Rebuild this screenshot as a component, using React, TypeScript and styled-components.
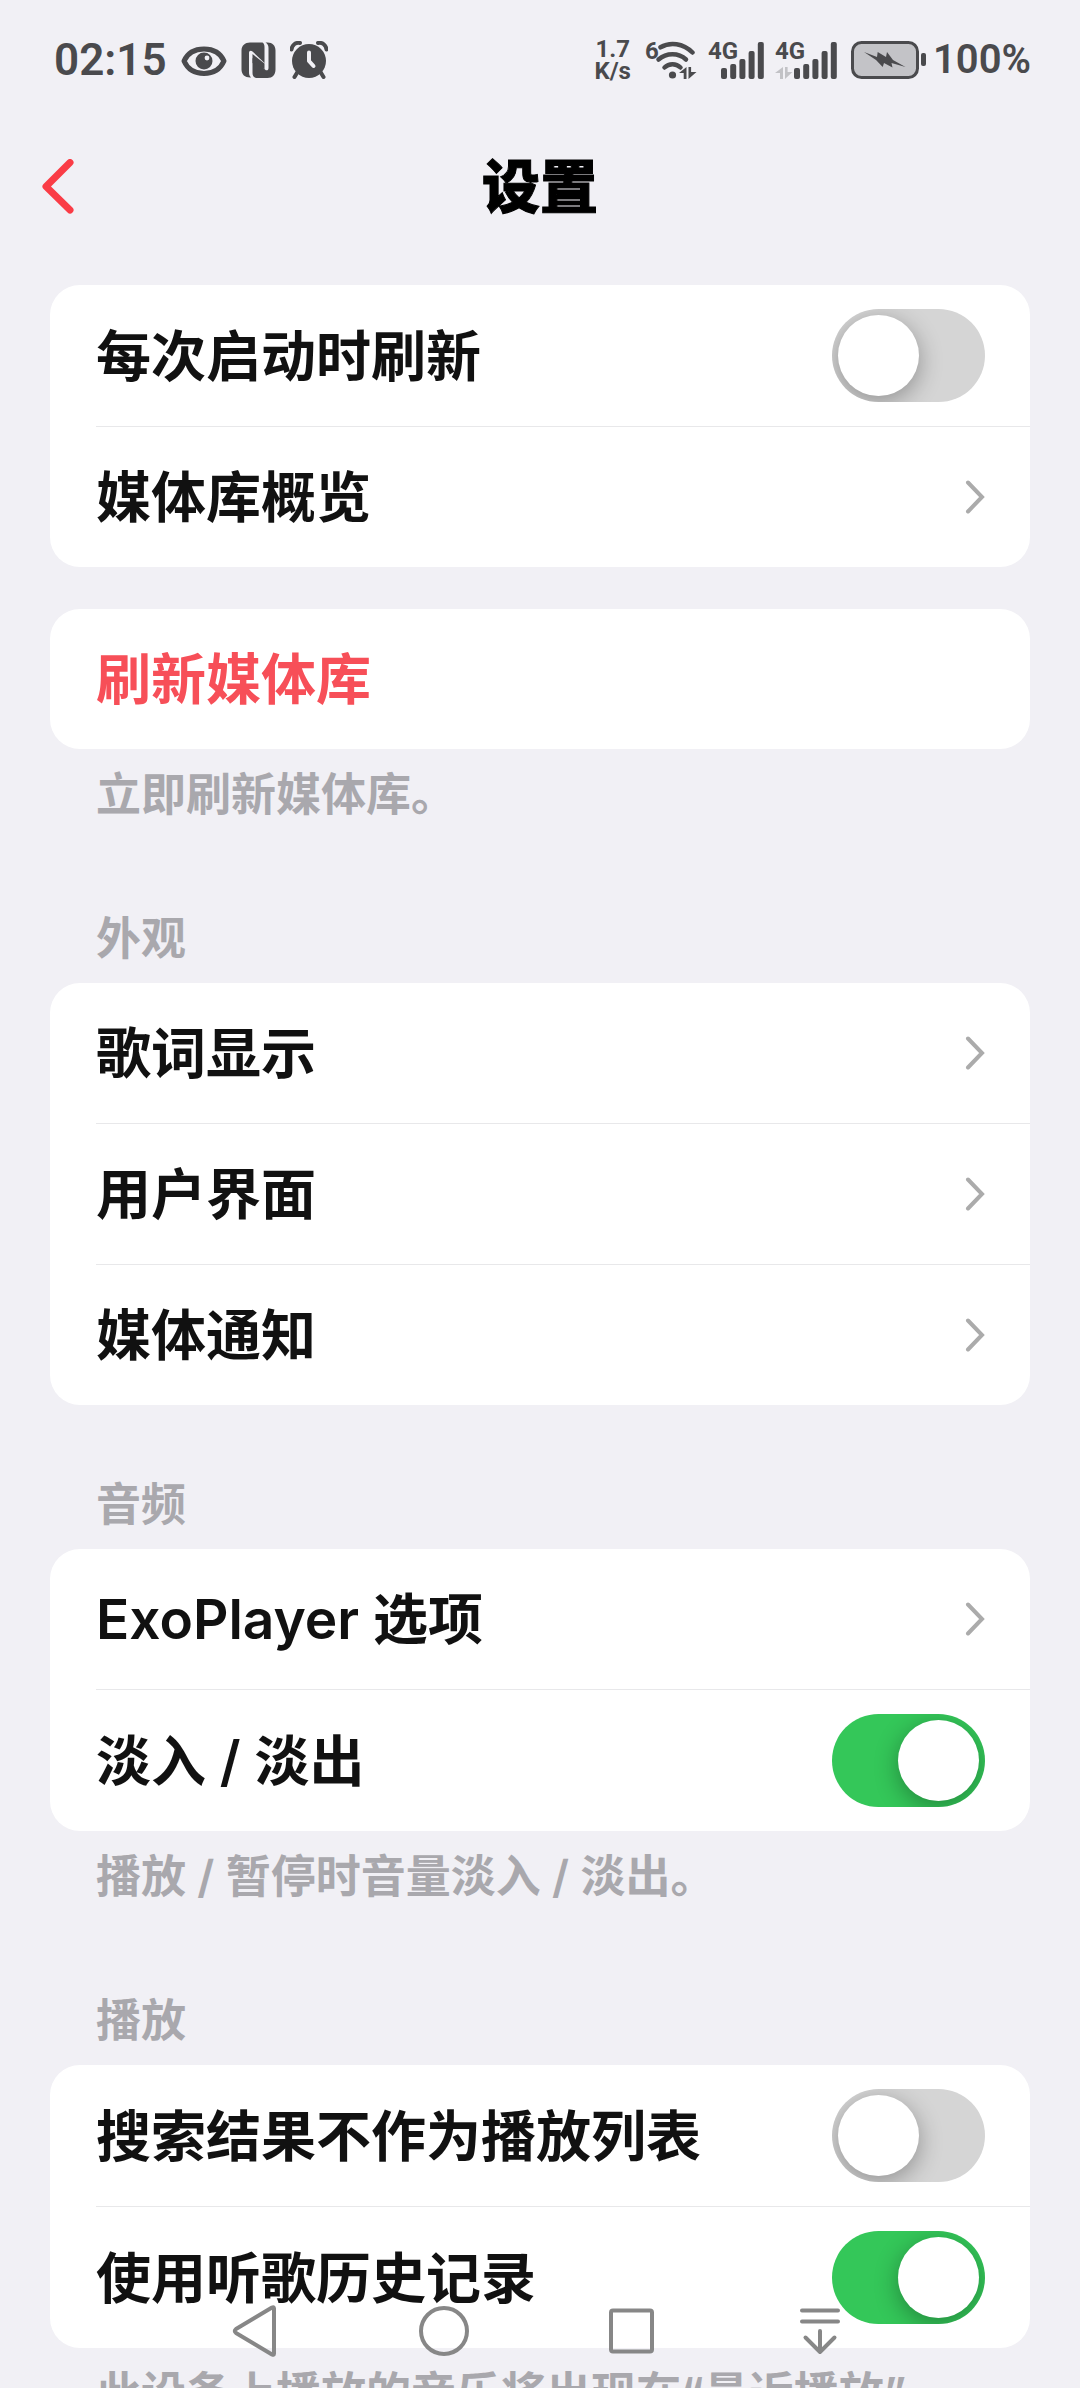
import React, { useState } from "react";
import styled, { createGlobalStyle, css } from "styled-components";

const color = {
  page: "#f1f0f5",
  card: "#ffffff",
  text: "#111111",
  muted: "#a9a8ad",
  divider: "#e8e8ea",
  accent: "#fa3c46",
  danger: "#f74f58",
  on: "#34c759",
  off: "#d5d5d5",
  arrow: "#ababab",
  status: "#4a4a4d",
  nav: "#878787",
};

const GlobalStyle = createGlobalStyle`
  *, *::before, *::after { box-sizing: border-box; }
  body {
    margin: 0;
    background: ${color.page};
    color: ${color.text};
    font-family: Inter, "Noto Sans CJK SC", sans-serif;
  }
`;

const Screen = styled.div`
  height: 100vh;
  display: flex;
  flex-direction: column;
  overflow: hidden;
  background: ${color.page};
`;

/* ---------- status bar ---------- */

const StatusBar = styled.div`
  flex: none;
  height: 120px;
  padding: 0 49px 0 54px;
  display: flex;
  align-items: center;
  justify-content: space-between;
  color: ${color.status};
  font-family: Roboto, sans-serif;
  font-weight: 600;
`;

const StatusGroup = styled.div<{ $gap: number }>`
  display: flex;
  align-items: center;
  gap: ${(p) => p.$gap}px;
`;

const Clock = styled.span`
  font-size: 44px;
  line-height: 48px;
`;

const Percent = styled.span`
  font-size: 40px;
  line-height: 48px;
`;

const Speed = styled.div`
  display: flex;
  flex-direction: column;
  align-items: center;
  font-size: 24px;
  line-height: 22px;
  font-weight: 700;
`;

const Badged = styled.div`
  position: relative;
  display: flex;
`;

const Badge = styled.span`
  position: absolute;
  left: 0;
  top: 0;
  font-size: 24px;
  line-height: 20px;
  font-weight: 700;
`;

const Glyph = styled.svg`
  display: block;
  flex: none;
`;

const EyeIcon = () => (
  <Glyph width="46" height="38" viewBox="0 0 46 38" fill="none">
    <path
      d="M3 20C7 11 14 8 23 8s16 3 20 12c-4 9-11 12.500-20 12.500S7 29 3 20Z"
      stroke="currentColor"
      strokeWidth="5"
      strokeLinejoin="round"
    />
    <circle cx="23" cy="20" r="8.5" fill="currentColor" />
    <circle cx="26" cy="17" r="2.4" fill={color.page} />
  </Glyph>
);

const NfcIcon = () => (
  <Glyph width="35" height="38" viewBox="0 0 35 38" fill="currentColor">
    <path d="M9 1.500H21.500C23 2.500 23.500 4 23.500 6V22L11.500 10.500C10 9 8 9.500 8 12V31C8 33.500 8.500 35 10 36.500H9C4 36.500 .5 33.500 .5 28.500V9.500C.5 4.500 4 1.500 9 1.500Z" />
    <path d="M24.500 1.500H26.500C31.500 1.500 34.500 4.500 34.500 9.500V28.500C34.500 33.500 31.500 37 26.500 37H15C12.500 36.500 11.500 34.500 11.500 32V17L24 28.500C25.500 30 27.500 29.500 27.500 27V7C27.500 4.500 26.500 2.500 24.500 1.500Z" />
    <path d="M11.500 13v9l12 6v-5.500Z" />
  </Glyph>
);

const AlarmIcon = () => (
  <Glyph width="38" height="38" viewBox="0 0 38 38" fill="none">
    <circle cx="19" cy="20" r="17" fill="currentColor" />
    <path
      d="M1.500 8.500C2 4 5.500 1.200 10 2M36.500 8.500C36 4 32.500 1.200 28 2"
      stroke="currentColor"
      strokeWidth="4"
      strokeLinecap="round"
    />
    <path d="M7.500 31l-3 5M30.500 31l3 5" stroke="currentColor" strokeWidth="4" strokeLinecap="round" />
    <path
      d="M19 11.500v8.500l4.500 5"
      stroke={color.page}
      strokeWidth="4"
      strokeLinecap="round"
      strokeLinejoin="round"
    />
  </Glyph>
);

const WifiIcon = () => (
  <Glyph width="52" height="38" viewBox="0 0 52 38" fill="none">
    <g stroke="currentColor" strokeWidth="4.500" strokeLinecap="round">
      <path d="M15.500 6.300C25 .6 38 2 47.500 11.500" />
      <path d="M13.500 18.500C21.500 11.500 33.500 11.500 41 18.500" />
      <path d="M19.500 26.500C24 22 31 22 35.500 26.500" />
    </g>
    <circle cx="27.500" cy="34" r="3.600" fill="currentColor" />
    <path d="M41.500 26v12h-2.800v-6H34ZM43.500 26h2.600v5H51.500l-8 7Z" fill="currentColor" />
  </Glyph>
);

const BAR_HEIGHTS = [11, 15, 20, 28, 37];

const SignalIcon = ({ lead, idle }: { lead: number; idle?: boolean }) => (
  <Glyph width={lead + 43} height="38" viewBox={`0 0 ${lead + 43} 38`} fill="currentColor">
    {idle && <path d="M8 26v12H5v-6H0ZM10 26h2.600v5H17.500l-7.500 7Z" fill="#c2c2c6" />}
    {BAR_HEIGHTS.map((h, i) => (
      <rect key={h} x={lead + i * 9.2} y={38 - h} width="6" height={h} rx="2" />
    ))}
  </Glyph>
);

const BatteryIcon = () => (
  <Glyph width="76" height="38" viewBox="0 0 76 38" fill="none">
    <rect x="1.500" y="1.500" width="65" height="35" rx="9" fill="#c3c3c7" stroke="currentColor" strokeWidth="3" />
    <rect x="70" y="12" width="5" height="13" rx="2" fill="currentColor" />
    <path
      d="M13 11l13 5 .7-5 8.300 5 1-5 6 8 12.500 7-14-4 1 4.500-8.500-4.500-1.300 4-6.700-7Z"
      fill="currentColor"
    />
  </Glyph>
);

/* ---------- title bar ---------- */

const TitleBar = styled.header`
  flex: none;
  height: 134px;
  padding: 0 30px;
  display: grid;
  grid-template-columns: 60px 1fr 60px;
  align-items: center;
`;

const plainButton = css`
  appearance: none;
  border: 0;
  margin: 0;
  padding: 0;
  background: none;
  font: inherit;
  text-align: left;
  cursor: pointer;
`;

const BackButton = styled.button`
  ${plainButton}
  height: 80px;
  padding-left: 10px;
  display: flex;
  align-items: center;
  color: ${color.accent};
`;

const Title = styled.h1`
  margin: 0;
  text-align: center;
  font-size: 58px;
  line-height: 80px;
  font-weight: 900;
  color: #000;
  -webkit-text-stroke: 1px #000;
`;

/* ---------- settings list ---------- */

const Content = styled.main`
  flex: 1;
  min-height: 0;
  overflow-y: auto;
  scrollbar-width: none;
  padding: 31px 50px 0;
`;

const Section = styled.section<{ $gap: number }>`
  margin-top: ${(p) => p.$gap}px;
`;

const sideText = css`
  margin: 0;
  padding: 2px 46px 0;
  font-size: 45px;
  line-height: 88px;
  font-weight: 600;
  color: ${color.muted};
`;

const Caption = styled.h2`
  ${sideText}
`;

const Note = styled.p`
  ${sideText}
`;

const Card = styled.div`
  background: ${color.card};
  border-radius: 30px;
  overflow: hidden;
  padding-left: 46px;
`;

const rowStyle = css`
  width: 100%;
  padding: 30px 45px 30px 0;
  display: flex;
  align-items: center;
  justify-content: space-between;
  font-size: 55px;
  line-height: 80px;
  font-weight: 600;
  text-decoration: none;
  color: ${color.text};
  cursor: pointer;
`;

const RowItem = styled.div`
  & + & {
    border-top: 1px solid ${color.divider};
  }
`;

const LinkRow = styled.a`
  ${rowStyle}
`;

const SwitchRow = styled.label`
  ${rowStyle}
  padding-top: 24px;
  padding-bottom: 24px;
`;

const ActionRow = styled.button`
  ${plainButton}
  ${rowStyle}
  color: ${color.danger};
`;

const Switch = styled.input`
  appearance: none;
  flex: none;
  width: 153px;
  height: 93px;
  margin: 0;
  padding: 6px;
  display: flex;
  border-radius: 47px;
  overflow: hidden;
  background: ${color.off};
  cursor: pointer;

  &::before {
    content: "";
    width: 81px;
    height: 81px;
    border-radius: 50%;
    background: #fff;
    box-shadow: 0 6px 24px rgba(0, 0, 0, 0.33);
  }

  &:checked {
    justify-content: flex-end;
    background: ${color.on};
  }
`;

const Chevron = () => (
  <Glyph width="20" height="34" viewBox="0 0 20 34" fill="none">
    <path d="M3 2.500l14 14.500L3 31.500" stroke={color.arrow} strokeWidth="4" strokeLinecap="round" />
  </Glyph>
);

const ToggleItem = ({ label, initial }: { label: string; initial: boolean }) => {
  const [on, setOn] = useState(initial);
  return (
    <RowItem>
      <SwitchRow>
        {label}
        <Switch type="checkbox" role="switch" checked={on} onChange={(e) => setOn(e.target.checked)} />
      </SwitchRow>
    </RowItem>
  );
};

const LinkItem = ({ label, to }: { label: string; to: string }) => (
  <RowItem>
    <LinkRow href={to}>
      {label}
      <Chevron />
    </LinkRow>
  </RowItem>
);

/* ---------- system navigation ---------- */

const NavBar = styled.nav`
  position: fixed;
  left: 0;
  right: 0;
  bottom: 0;
  height: 114px;
  display: flex;
  justify-content: center;
  color: ${color.nav};
`;

const NavButton = styled.button`
  ${plainButton}
  width: 188px;
  display: flex;
  align-items: center;
  justify-content: center;
  color: inherit;
`;

const NAV_ICONS = [
  { name: "返回", shape: <path d="M43 4.500V49.500Q43 51.500 41 50.500L5 29Q2.500 27 5 25L41 3.500Q43 2.500 43 4.500Z" /> },
  { name: "主屏幕", shape: <circle cx="25" cy="27" r="23" /> },
  { name: "最近任务", shape: <rect x="4" y="6.500" width="41" height="41" rx="2" /> },
  { name: "收起导航栏", shape: <path d="M7 6.500H43M7 17.500H43M25 27V48M10.500 33.500L25 48L39.500 33.500" /> },
];

export default function App() {
  return (
    <Screen>
      <GlobalStyle />
      <StatusBar>
        <StatusGroup $gap={14}>
          <Clock>02:15</Clock>
          <EyeIcon />
          <NfcIcon />
          <AlarmIcon />
        </StatusGroup>
        <StatusGroup $gap={14}>
          <Speed>
            <span>1.7</span>
            <span>K/s</span>
          </Speed>
          <StatusGroup $gap={11}>
            <Badged>
              <Badge>6</Badge>
              <WifiIcon />
            </Badged>
            <Badged>
              <Badge>4G</Badge>
              <SignalIcon lead={13} />
            </Badged>
            <Badged>
              <Badge>4G</Badge>
              <SignalIcon lead={19} idle />
            </Badged>
          </StatusGroup>
          <StatusGroup $gap={6}>
            <BatteryIcon />
            <Percent>100%</Percent>
          </StatusGroup>
        </StatusGroup>
      </StatusBar>

      <TitleBar>
        <BackButton type="button" aria-label="返回">
          <Glyph width="36" height="56" viewBox="0 0 36 56" fill="none">
            <path d="M30 3.500L6 27.500L30 51" stroke="currentColor" strokeWidth="7" strokeLinecap="round" strokeLinejoin="round" />
          </Glyph>
        </BackButton>
        <Title>设置</Title>
      </TitleBar>

      <Content>
        <Section $gap={0}>
          <Card>
            <ToggleItem label="每次启动时刷新" initial={false} />
            <LinkItem label="媒体库概览" to="#library" />
          </Card>
        </Section>

        <Section $gap={42}>
          <Card>
            <RowItem>
              <ActionRow type="button">刷新媒体库</ActionRow>
            </RowItem>
          </Card>
          <Note>立即刷新媒体库。</Note>
        </Section>

        <Section $gap={54}>
          <Caption>外观</Caption>
          <Card>
            <LinkItem label="歌词显示" to="#lyrics" />
            <LinkItem label="用户界面" to="#interface" />
            <LinkItem label="媒体通知" to="#notification" />
          </Card>
        </Section>

        <Section $gap={54}>
          <Caption>音频</Caption>
          <Card>
            <LinkItem label="ExoPlayer 选项" to="#exoplayer" />
            <ToggleItem label="淡入 / 淡出" initial={true} />
          </Card>
          <Note>播放 / 暂停时音量淡入 / 淡出。</Note>
        </Section>

        <Section $gap={54}>
          <Caption>播放</Caption>
          <Card>
            <ToggleItem label="搜索结果不作为播放列表" initial={false} />
            <ToggleItem label="使用听歌历史记录" initial={true} />
          </Card>
          <Note>此设备上播放的音乐将出现在“最近播放”</Note>
        </Section>
      </Content>

      <NavBar>
        {NAV_ICONS.map(({ name, shape }) => (
          <NavButton key={name} type="button" aria-label={name}>
            <Glyph
              width="54"
              height="54"
              viewBox="0 0 54 54"
              fill="none"
              stroke="currentColor"
              strokeWidth="4"
              strokeLinecap="round"
              strokeLinejoin="round"
            >
              {shape}
            </Glyph>
          </NavButton>
        ))}
      </NavBar>
    </Screen>
  );
}
